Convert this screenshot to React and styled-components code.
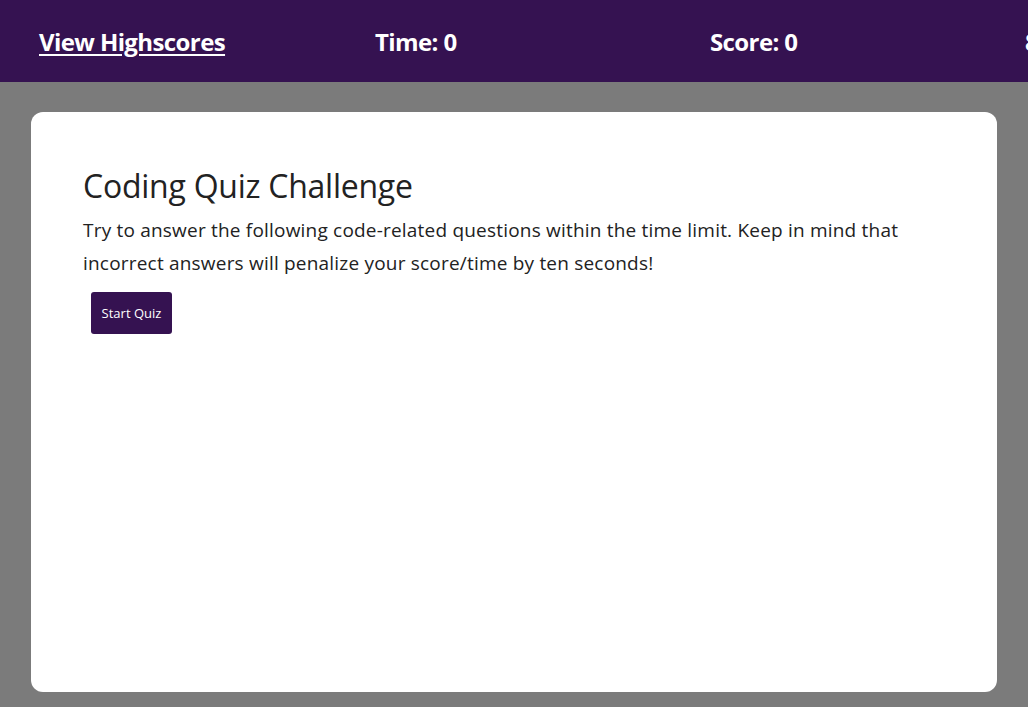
import React from "react";
import styled, { createGlobalStyle } from "styled-components";

const Global = createGlobalStyle`
  html, body { margin: 0; padding: 0; }
  body {
    background: #7b7b7b;
    font-family: "Open Sans", "Noto Sans", sans-serif;
    overflow: hidden;
  }
`;

const Header = styled.header`
  background: #351251;
  height: 82px;
  display: grid;
  grid-template-columns: 336px 335px 315px auto;
  align-items: center;
  padding-left: 39px;
  overflow: hidden;
  white-space: nowrap;
`;

const NavItem = styled.div`
  color: #fff;
  font-size: 24px;
  font-weight: 700;
  letter-spacing: -0.6px;
`;

const NavLink = styled.a`
  color: #fff;
  text-decoration: underline;
  text-underline-offset: 3px;
  text-decoration-thickness: 2px;
`;

const Main = styled.main`
  padding: 30px 31px 30px;
`;

const Card = styled.section`
  background: #fff;
  border-radius: 12px;
  height: 580px;
  box-sizing: border-box;
  padding: 52px 52px;
`;

const Title = styled.h1`
  margin: 0 0 6px;
  font-size: 32px;
  font-weight: 400;
  color: #222;
  line-height: 44px;
  letter-spacing: -0.25px;
`;

const Text = styled.p`
  margin: 0;
  font-size: 19px;
  line-height: 33px;
  color: #222;
  letter-spacing: 0.2px;
`;

const StartButton = styled.button`
  margin: 12px 0 0 8px;
  width: 81px;
  height: 42px;
  background: #351251;
  color: #fff;
  border: none;
  border-radius: 3px;
  font-family: inherit;
  font-size: 13px;
  cursor: pointer;
`;

export default function App() {
  return (
    <>
      <Global />
      <Header>
        <NavItem>
          <NavLink href="#">View Highscores</NavLink>
        </NavItem>
        <NavItem>Time: 0</NavItem>
        <NavItem>Score: 0</NavItem>
        <NavItem>80</NavItem>
      </Header>
      <Main>
        <Card>
          <Title>Coding Quiz Challenge</Title>
          <Text>
            Try to answer the following code-related questions within the time limit. Keep in mind that
            incorrect answers will penalize your score/time by ten seconds!
          </Text>
          <StartButton>Start Quiz</StartButton>
        </Card>
      </Main>
    </>
  );
}
